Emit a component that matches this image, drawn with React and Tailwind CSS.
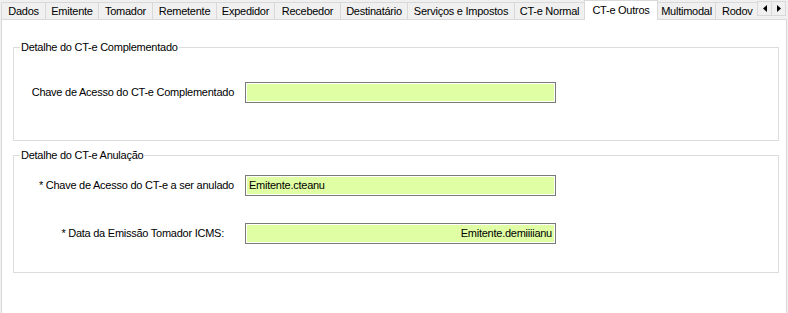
import React from "react";

const tabs = [
  { label: "Dados", w: "w-[45px]" },
  { label: "Emitente", w: "w-[54px]" },
  { label: "Tomador", w: "w-[55px]" },
  { label: "Remetente", w: "w-[65px]" },
  { label: "Expedidor", w: "w-[59px]" },
  { label: "Recebedor", w: "w-[67px]" },
  { label: "Destinatário", w: "w-[68px]" },
  { label: "Serviços e Impostos", w: "w-[108px]" },
  { label: "CT-e Normal", w: "w-[71px]" },
  { label: "CT-e Outros", w: "w-[74px]", active: true },
  { label: "Multimodal", w: "w-[59px]" },
  { label: "Rodov", w: "w-[42px]", clipped: true },
];

function Field({ label, value, right, labelPad = "pr-[11px]" }) {
  return (
    <div className="flex items-center">
      <div className={`w-[231px] text-right ${labelPad} whitespace-nowrap`}>{label}</div>
      <div
        className={`w-[311px] h-[21px] border border-[#7a7a7a] bg-[#e0ffa5] shadow-[inset_0_0_0_1px_#ffffff] flex items-center px-[3px] ${
          right ? "justify-end" : ""
        }`}
      >
        {value}
      </div>
    </div>
  );
}

function Group({ title, className, children }) {
  return (
    <div className={`relative ml-[11px] w-[766px] border border-[#dcdcdc] ${className}`}>
      {/* title sits over the top border */}
      <span className="absolute left-[6px] -top-[8px] bg-white px-[1px] leading-[14px]">{title}</span>
      {children}
    </div>
  );
}

export default function App() {
  return (
    <div className="w-[788px] h-[313px] bg-[#f0f0f0] overflow-hidden font-['Liberation_Sans',Arial,sans-serif] text-[11px] tracking-[-0.25px] text-black">
      {/* TAB STRIP */}
      <div className="flex h-[19px] items-end">
        <div className="flex w-[757px] items-end pl-[2px] h-[19px]">
          {tabs.map((t) =>
            t.active ? (
              <div
                key={t.label}
                className={`${t.w} shrink-0 -ml-px h-[20px] mb-[-1px] z-10 bg-white border border-b-0 border-[#d9d9d9] flex items-start justify-center pt-[1px]`}
              >
                {t.label}
              </div>
            ) : (
              <div
                key={t.label}
                className={`${t.w} shrink-0 -ml-px h-[17px] bg-[#f0f0f0] border border-b-0 border-[#d9d9d9] flex items-center pt-[1px] ${
                  t.clipped ? "justify-start pl-[6px] border-r-0" : "justify-center"
                }`}
              >
                {t.label}
              </div>
            )
          )}
        </div>
        <div className="flex self-start mt-[1px]">
          <div className="w-[15px] h-[15px] border border-[#d9d9d9] bg-[#f0f0f0] flex items-center justify-center">
            <svg width="4" height="7" viewBox="0 0 4 7">
              <path d="M4 0 L0 3.5 L4 7 Z" fill="#000" />
            </svg>
          </div>
          <div className="w-[15px] h-[15px] -ml-px border border-[#d9d9d9] bg-[#f0f0f0] flex items-center justify-center">
            <svg width="4" height="7" viewBox="0 0 4 7">
              <path d="M0 0 L4 3.5 L0 7 Z" fill="#000" />
            </svg>
          </div>
        </div>
      </div>

      {/* TAB PANEL */}
      <div className="ml-[1px] w-[786px] h-[294px] border border-b-0 border-[#d9d9d9] bg-white">
        <Group title="Detalhe do CT-e Complementado" className="mt-[27px] pt-[34px] pb-[37px]">
          <Field label="Chave de Acesso do CT-e Complementado" value="" />
        </Group>

        <Group title="Detalhe do CT-e Anulação" className="mt-[14px] pt-[19px] pb-[28px]">
          <div className="flex flex-col gap-[27px]">
            <Field label="* Chave de Acesso do CT-e a ser anulado" value="Emitente.cteanu" />
            <Field
              label="* Data da Emissão Tomador ICMS:"
              value="Emitente.demiiiianu"
              right
              labelPad="pr-[21px]"
            />
          </div>
        </Group>
      </div>
    </div>
  );
}
